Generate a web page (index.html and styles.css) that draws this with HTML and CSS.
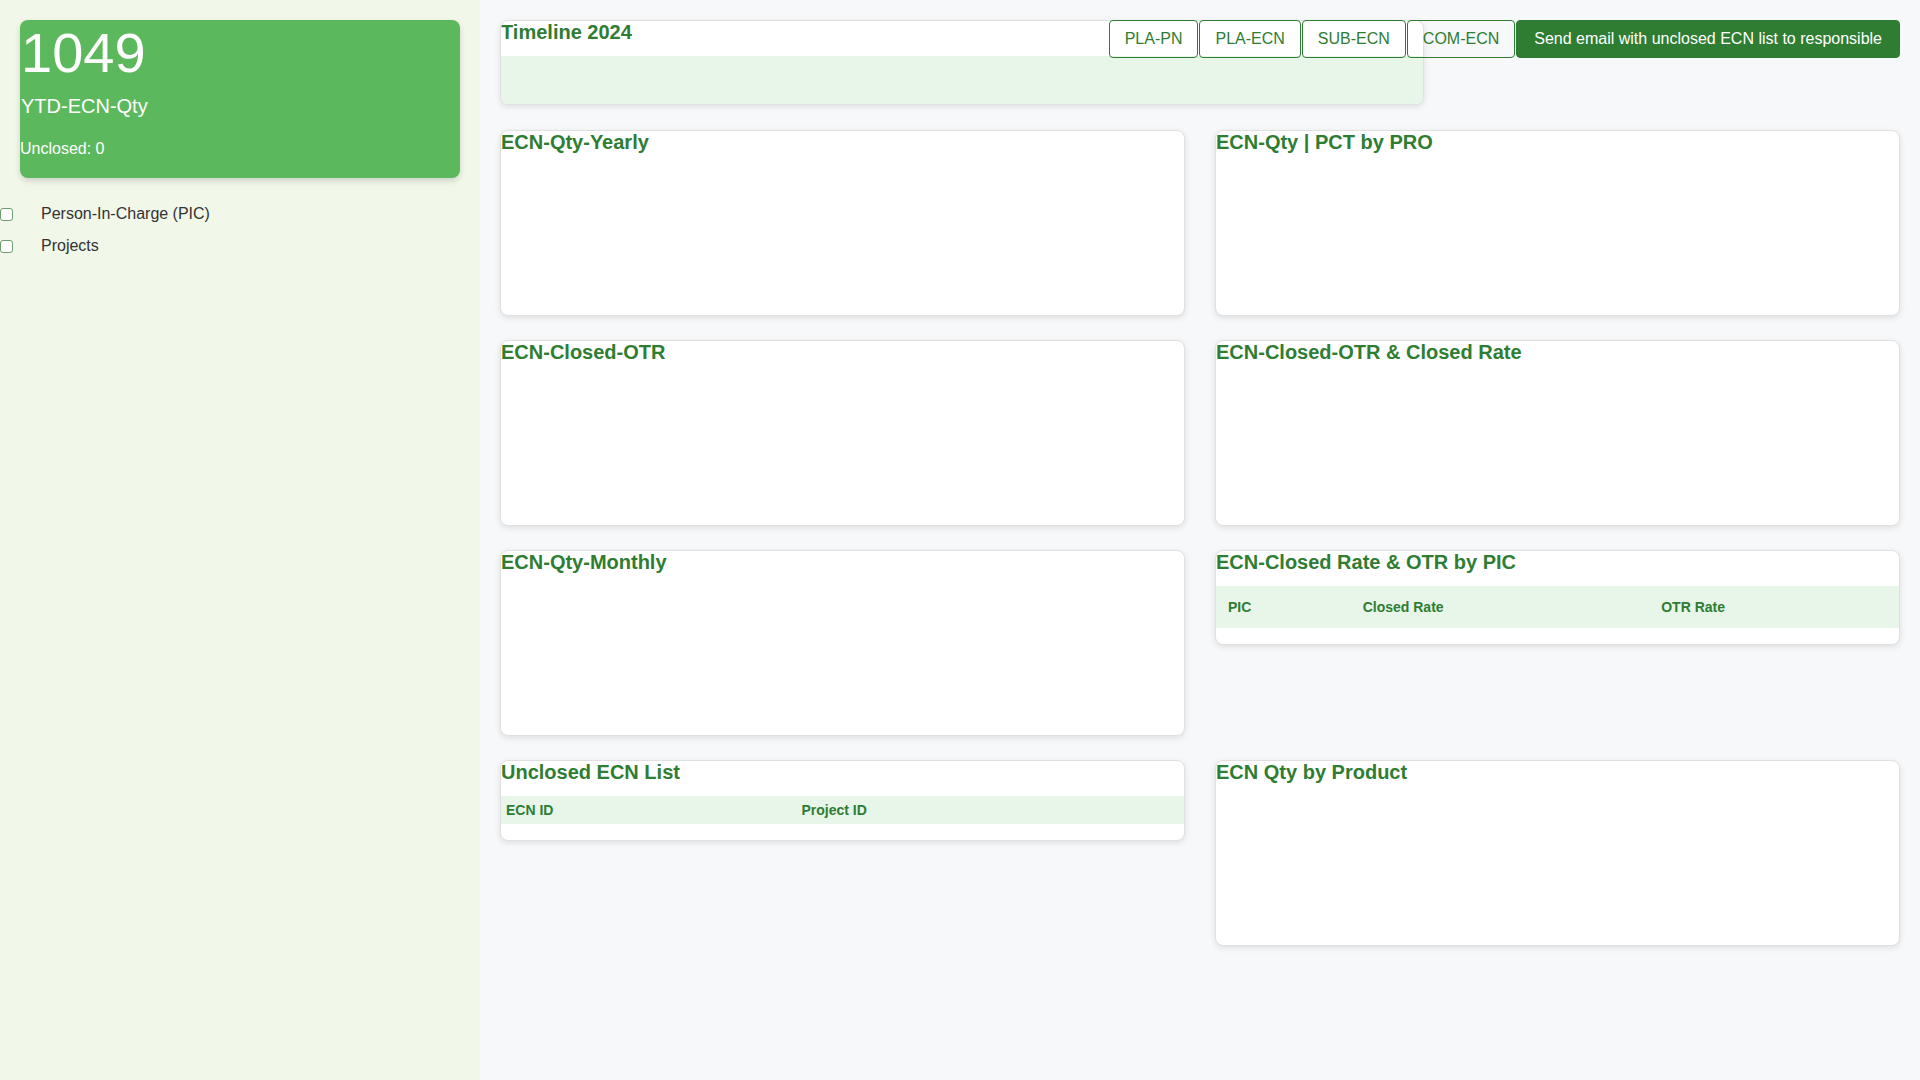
FILE: index.html
```html
<html>
  <head>
    <title>ECN Dashboard</title>
    <link rel="stylesheet" href="styles.css">
  </head>
  <body>
    <div class="sidebar">
      <div class="stat-card">
        <h1 class="stat-value">1049</h1>
        <p class="stat-label">YTD-ECN-Qty</p>
        <p class="stat-sub">Unclosed: 0</p>
      </div>
      <div class="filters">
        <label class="filter-row"><input type="checkbox"><span>Person-In-Charge (PIC)</span></label>
        <label class="filter-row"><input type="checkbox"><span>Projects</span></label>
      </div>
    </div>

    <div class="main">
      <div class="toolbar">
        <button class="btn-outline">PLA-PN</button>
        <button class="btn-outline">PLA-ECN</button>
        <button class="btn-outline">SUB-ECN</button>
        <button class="btn-outline">COM-ECN</button>
        <button class="btn-send">Send email with unclosed ECN list to responsible</button>
      </div>

      <div class="card timeline-card">
        <h3 class="card-title">Timeline 2024</h3>
        <div class="timeline-band"></div>
      </div>

      <div class="grid">
        <div class="card">
          <h3 class="card-title">ECN-Qty-Yearly</h3>
          <div class="chart"></div>
        </div>
        <div class="card">
          <h3 class="card-title">ECN-Qty | PCT by PRO</h3>
          <div class="chart"></div>
        </div>
        <div class="card">
          <h3 class="card-title">ECN-Closed-OTR</h3>
          <div class="chart"></div>
        </div>
        <div class="card">
          <h3 class="card-title">ECN-Closed-OTR &amp; Closed Rate</h3>
          <div class="chart"></div>
        </div>
        <div class="card">
          <h3 class="card-title">ECN-Qty-Monthly</h3>
          <div class="chart"></div>
        </div>
        <div class="card">
          <h3 class="card-title">ECN-Closed Rate &amp; OTR by PIC</h3>
          <table class="data-table pic-table">
            <thead>
              <tr>
                <th>PIC</th>
                <th>Closed Rate</th>
                <th>OTR Rate</th>
              </tr>
            </thead>
            <tbody></tbody>
          </table>
        </div>
        <div class="card">
          <h3 class="card-title">Unclosed ECN List</h3>
          <table class="data-table ecn-table">
            <thead>
              <tr>
                <th>ECN ID</th>
                <th>Project ID</th>
              </tr>
            </thead>
            <tbody></tbody>
          </table>
        </div>
        <div class="card">
          <h3 class="card-title">ECN Qty by Product</h3>
          <div class="chart"></div>
        </div>
      </div>
    </div>
  </body>
</html>
```

FILE: styles.css
```css
* {
  box-sizing: border-box;
}

body {
  margin: 0;
  display: flex;
  min-height: 100vh;
  font-family: "Liberation Sans", Arial, sans-serif;
  background-color: #f7f8fa;
  color: #333;
}

/* sidebar */
.sidebar {
  width: 480px;
  flex-shrink: 0;
  background-color: #f1f7e9;
}

.stat-card {
  margin: 20px;
  padding-bottom: 20px;
  background-color: #5cb85c;
  color: #fff;
  border-radius: 8px;
  box-shadow: 0 3px 6px rgba(0, 0, 0, 0.15);
}

.stat-value {
  margin: 0;
  padding-left: 1px;
  font-size: 56px;
  font-weight: normal;
}

.stat-label {
  margin: 10px 0 0;
  padding-left: 1px;
  font-size: 20px;
  line-height: 23px;
}

.stat-sub {
  margin: 22px 0 0;
  font-size: 16px;
  line-height: 18px;
}

.filters {
  margin-top: 20px;
}

.filter-row {
  display: flex;
  align-items: center;
  height: 32px;
  font-size: 16px;
  color: #333;
}

.filter-row input {
  appearance: none;
  width: 13px;
  height: 13px;
  margin: 0 28px 0 0;
  border: 1px solid #6b9e6b;
  border-radius: 3px;
  background: #fff;
}

/* main area */
.main {
  flex: 1;
  position: relative;
  padding: 20px;
}

.toolbar {
  position: absolute;
  top: 20px;
  right: 20px;
  display: flex;
  gap: 1px;
}

.toolbar button {
  height: 38px;
  padding: 0 15px;
  font-family: "Liberation Sans", Arial, sans-serif;
  font-size: 16px;
  border-radius: 4px;
  cursor: pointer;
}

.btn-outline {
  background: transparent;
  color: #2e7d32;
  border: 1px solid #2e7d32;
}

.btn-send {
  background-color: #2e7d32;
  color: #fff;
  border: 1px solid #2e7d32;
  padding: 0 17px !important;
}

.card {
  background: #fff;
  border: 1px solid #e0e0e0;
  border-radius: 8px;
  box-shadow: 0 2px 6px rgba(0, 0, 0, 0.1);
  overflow: hidden;
}

.card-title {
  margin: 0 0 12px;
  font-size: 20px;
  line-height: 23px;
  color: #2e7d32;
}

.timeline-card {
  width: 66%;
  margin-bottom: 25px;
}

.timeline-band {
  height: 48px;
  background-color: #e8f5e9;
}

.grid {
  display: grid;
  grid-template-columns: 1fr 1fr;
  column-gap: 30px;
  row-gap: 24px;
  align-items: start;
}

.chart {
  height: 149px;
}

.data-table {
  width: 100%;
  border-collapse: collapse;
  margin-bottom: 16px;
}

.data-table th {
  background-color: #e8f5e9;
  color: #2e7d32;
  font-size: 14px;
  line-height: 18px;
  text-align: left;
}

.pic-table th {
  padding: 12px;
}

.ecn-table th {
  padding: 5px;
}
```
